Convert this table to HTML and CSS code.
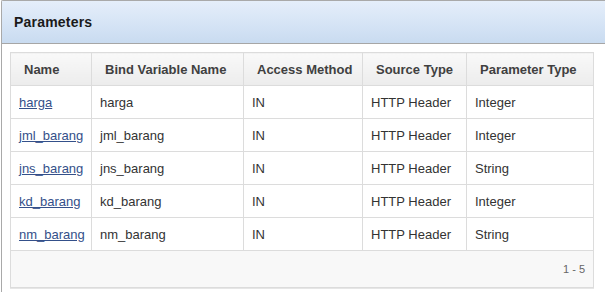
FILE: index.html
```html
<!DOCTYPE html>
<html>
<head>
<meta charset="utf-8">
<link rel="stylesheet" href="styles.css">
</head>
<body>
<div class="panel">
  <div class="panel-head"><h2 class="panel-title">Parameters</h2></div>
  <div class="panel-body">
    <table class="report">
      <colgroup>
        <col class="c1"><col class="c2"><col class="c3"><col class="c4"><col class="c5">
      </colgroup>
      <thead>
        <tr><th>Name</th><th>Bind Variable Name</th><th>Access Method</th><th>Source Type</th><th>Parameter Type</th></tr>
      </thead>
      <tbody>
        <tr><td><a href="#">harga</a></td><td>harga</td><td>IN</td><td>HTTP Header</td><td>Integer</td></tr>
        <tr><td><a href="#">jml_barang</a></td><td>jml_barang</td><td>IN</td><td>HTTP Header</td><td>Integer</td></tr>
        <tr><td><a href="#">jns_barang</a></td><td>jns_barang</td><td>IN</td><td>HTTP Header</td><td>String</td></tr>
        <tr><td><a href="#">kd_barang</a></td><td>kd_barang</td><td>IN</td><td>HTTP Header</td><td>Integer</td></tr>
        <tr><td><a href="#">nm_barang</a></td><td>nm_barang</td><td>IN</td><td>HTTP Header</td><td>String</td></tr>
      </tbody>
      <tfoot>
        <tr><td colspan="5" class="pager">1 - 5</td></tr>
      </tfoot>
    </table>
  </div>
</div>
</body>
</html>
```

FILE: styles.css
```css
html, body {
  margin: 0;
  padding: 0;
  background: #ffffff;
  font-family: "Liberation Sans", Arial, sans-serif;
}

.panel {
  margin-left: 1px;
  width: 604px;
  height: 292px;
  border-top: 1px solid #a9a9a9;
  border-left: 1px solid #a9a9a9;
  border-top-left-radius: 2px;
  box-sizing: border-box;
}

.panel-head {
  height: 42px;
  border-bottom: 1px solid #a6a6a6;
  background: linear-gradient(to bottom, #e5eefa 0%, #d4e3f5 60%, #c9dbf0 100%);
  display: flex;
  align-items: center;
  padding-left: 12px;
}

.panel-title {
  margin: 0;
  font-size: 14px;
  font-weight: bold;
  color: #1a1a1a;
  letter-spacing: 0.2px;
}

.panel-body {
  padding: 8px 0 0 8px;
}

.report {
  border-collapse: collapse;
  table-layout: fixed;
  width: 583px;
  font-size: 13px;
  color: #333333;
  border: 1px solid #dcdcdc;
  border-bottom-color: #d2d2d2;
  box-shadow: 0 1px 0 #e6e6e6;
}

.c1 { width: 81px; }
.c2 { width: 152px; }
.c3 { width: 119px; }
.c4 { width: 104px; }
.c5 { width: 127px; }

.report th {
  height: 32px;
  padding: 0 12px 0 13px;
  text-align: left;
  font-weight: bold;
  color: #404040;
  background: linear-gradient(to bottom, #f9f9f9 0%, #ececec 100%);
  border: 1px solid #dcdcdc;
  white-space: nowrap;
}

.report tbody td {
  height: 32px;
  padding: 0 8px 0 8px;
  border: 1px solid #dcdcdc;
  white-space: nowrap;
}

.report a {
  color: #34508a;
  text-decoration: underline;
}

.report .pager {
  height: 36px;
  background: #f8f8f8;
  text-align: right;
  padding: 0 8px 0 0;
  font-size: 11px;
  color: #666666;
  border: 1px solid #dcdcdc;
}
```
